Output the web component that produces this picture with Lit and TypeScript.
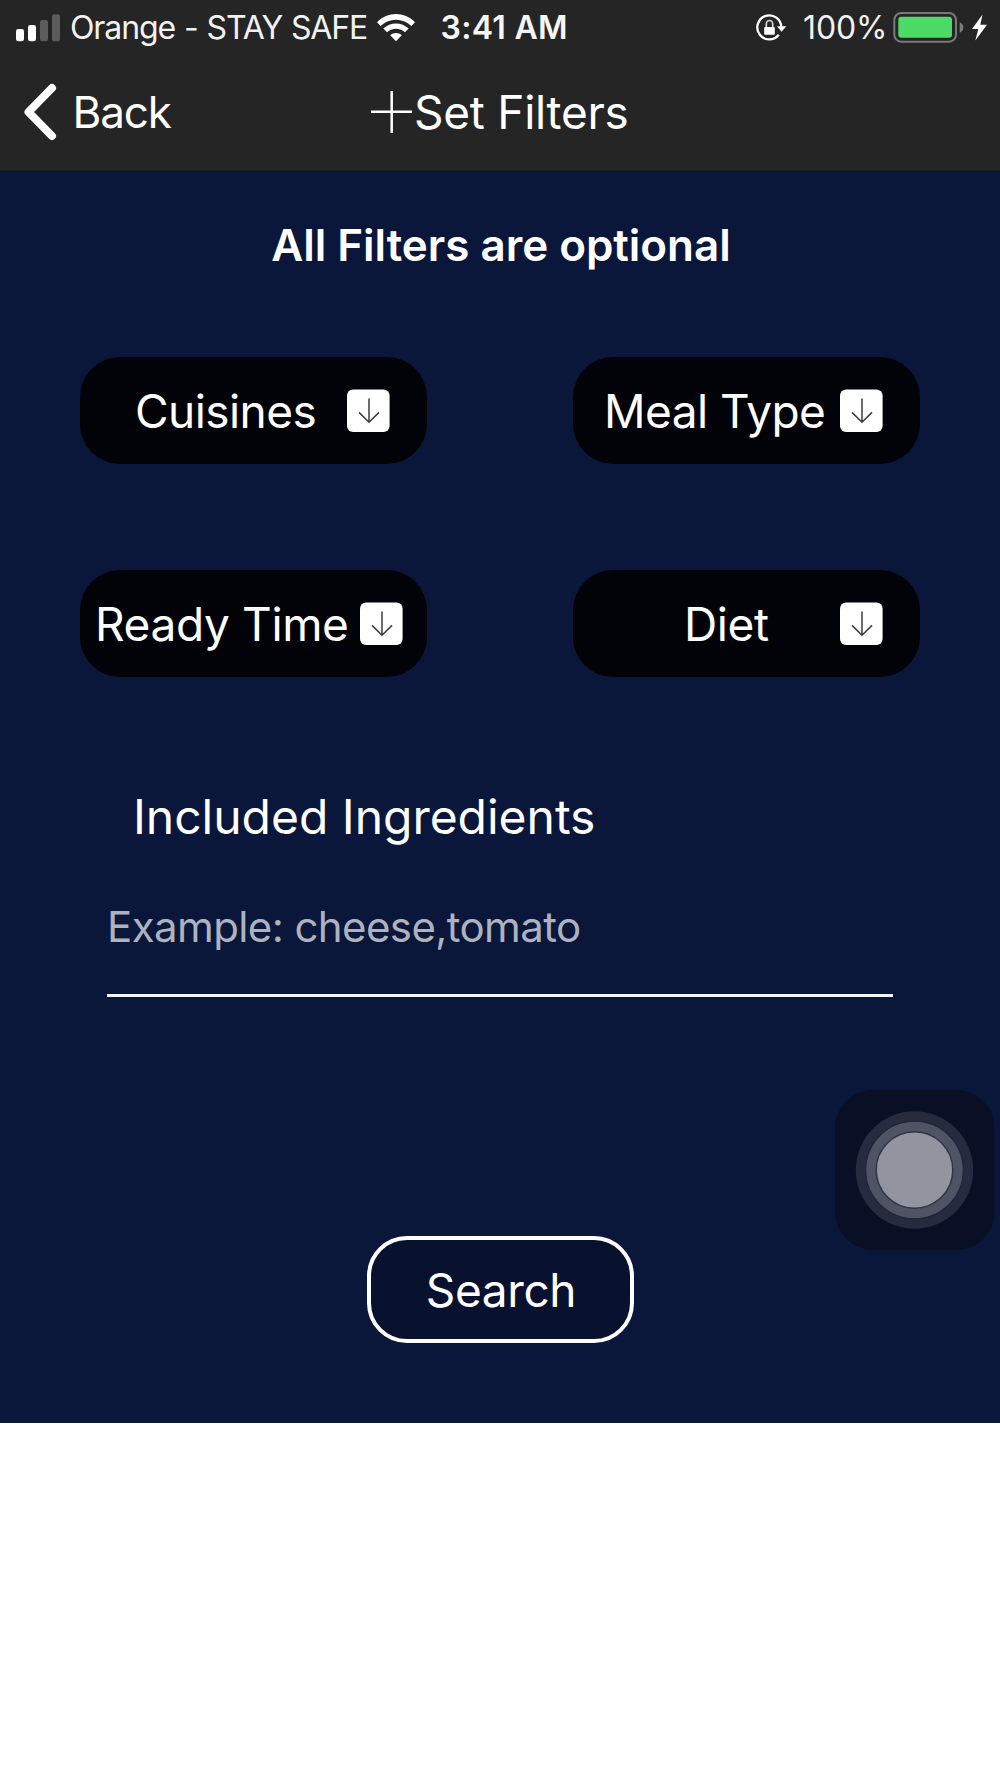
import { LitElement, html, css, svg } from 'lit';
import { customElement, property } from 'lit/decorators.js';

@customElement('filter-button')
class FilterButton extends LitElement {
  @property() label = '';

  static styles = css`
    :host { display: block; }
    .button {
      display: flex; align-items: center; justify-content: space-between;
      width: 100%; height: 107px; box-sizing: border-box;
      padding: 0 var(--pad-right, 38px) 0 var(--pad-left, 38px);
      border: 0; border-radius: 40px; background: #020308; color: #fff;
      font: 400 46px/56px Inter, sans-serif; letter-spacing: var(--spacing, -0.4px);
      white-space: nowrap; text-align: left;
    }
    .label { padding-top: 1px; }
    .icon { display: block; flex: none; width: 43px; height: 43px; }
  `;

  render() {
    return html`
      <button class="button">
        <span class="label">${this.label}</span>
        <svg class="icon" viewBox="0 0 43 43" fill="none">
          <rect x="0" y="0.4" width="42.6" height="42.6" rx="6" fill="#fff" />
          <path d="M22 9.400v23.600M12 23.400l10 9.800 10-9.800" stroke="#3c3c40" stroke-width="1.5" />
        </svg>
      </button>
    `;
  }
}

const signalIcon = svg`
  <rect x="0" y="15" width="8" height="12.3" rx="2.4" fill="#fff" />
  <rect x="12" y="11" width="8" height="16.3" rx="2.4" fill="#fff" />
  <rect x="24" y="6" width="8" height="21.3" rx="2.4" fill="#5c5c5c" />
  <rect x="36" y="0.3" width="8" height="27" rx="2.4" fill="#5c5c5c" />
`;

const wifiIcon = svg`
  <path d="M0 8.3C10.6-2.6 27.4-2.6 38 8.3L34.3 12C25.700 3.600 12.300 3.600 3.700 12Z" fill="#fff" />
  <path d="M6.300 14.600C13.500 7.700 24.500 7.700 31.700 14.600L28 18.200C22.800 13.500 15.200 13.500 10 18.200Z" fill="#fff" />
  <path d="M13.200 21.300C16.500 18.300 21.500 18.300 24.800 21.300L19 27.300Z" fill="#fff" />
`;

const rotationLockIcon = svg`
  <path d="M25.300 13.300A12 12 0 1 0 22.800 20.700" fill="none" stroke="#fff" stroke-width="2.300" />
  <path d="M21 12.300h9.300l-4.700 5.500z" fill="#fff" />
  <rect x="8.200" y="13" width="10.600" height="7.700" rx="1" fill="#fff" />
  <path d="M10.300 13.500V10.200a3.200 3.700 0 0 1 6.400 0V13.500" fill="none" stroke="#d8d8d8" stroke-width="1.700" />
`;

const batteryIcon = svg`
  <rect x="1.300" y="1" width="61.700" height="28.700" rx="7" fill="none" stroke="#7a7a7a" stroke-width="2" />
  <rect x="5.300" y="4.800" width="53.700" height="21" rx="3" fill="#4cdb64" />
  <path d="M66.700 10.200c5 1.800 5 8.600 0 10.500z" fill="#7a7a7a" />
`;

@customElement('app-root')
class AppRoot extends LitElement {
  static styles = css`
    :host { display: block; width: 1000px; height: 1778px; background: #fff; color: #fff; font-family: Inter, sans-serif; }
    svg { display: block; flex: none; overflow: visible; }
    .header { height: 171px; box-sizing: border-box; background: #252525; border-bottom: 1px solid #191b22; }
    .status { display: flex; align-items: center; height: 55px; padding: 0 13px 0 16px; box-sizing: border-box; font-size: 32px; line-height: 40px; white-space: nowrap; }
    .carrier { margin-left: 10px; width: 307px; letter-spacing: -1.1px; word-spacing: 1px; color: #f2f2f2; }
    .time { margin-left: 25.500px; font-weight: 600; letter-spacing: 0.29px; color: #f6f6f6; }
    .status-right { display: flex; align-items: center; margin-left: auto; }
    .percent { width: 90px; margin-left: 17px; letter-spacing: -0.13px; color: #f2f2f2; }
    .bolt { margin-left: 8px; }
    .nav { display: grid; grid-template-columns: 371px auto 1fr; align-items: center; height: 115px; white-space: nowrap; }
    .back { display: flex; align-items: center; padding: 0 0 1px 24px; border: 0; background: none; color: #fff; font: 400 44px/54px Inter, sans-serif; letter-spacing: -1.1px; }
    .back-label { margin-left: 16.500px; padding-bottom: 1px; }
    .title { display: flex; align-items: center; margin: 0; font-weight: 400; font-size: 46px; line-height: 56px; letter-spacing: -0.26px; }
    .title-label { margin-left: 2px; padding-bottom: 2px; }
    .content { display: flex; flex-direction: column; height: 1252px; box-sizing: border-box; padding: 47px 80px 0; background: #0a163a; }
    .hint { margin: 0; padding-left: 2px; text-align: center; font-weight: 600; font-size: 44px; line-height: 54px; letter-spacing: -0.03px; }
    .filters { display: grid; grid-template-columns: 347px 347px; justify-content: space-between; row-gap: 106px; margin-top: 85px; }
    .cuisines { --pad-left: 55px; --pad-right: 37.500px; --spacing: -0.55px; }
    .meal { --pad-left: 31px; --pad-right: 37.500px; --spacing: -0.57px; }
    .ready { --pad-left: 15px; --pad-right: 24px; --spacing: -0.36px; }
    .diet { --pad-left: 111px; --pad-right: 37.500px; --spacing: -0.39px; }
    .section { margin: 110px 0 0 53px; font-weight: 400; font-size: 48px; line-height: 60px; letter-spacing: -0.02px; }
    .field { margin: 46px 27px 0; height: 104px; box-sizing: border-box; padding: 0 0 35px; border: 0; border-bottom: 3px solid #f4f5f8; border-radius: 0; outline: none; background: none; color: #fff; font: 400 42px/66px Inter, sans-serif; letter-spacing: -0.6px; }
    .field::placeholder { color: #adb2bf; opacity: 1; }
    .search { align-self: center; margin-top: 239px; width: 267px; height: 107px; box-sizing: border-box; padding: 0 0 0 2px; border: 4px solid #fff; border-radius: 40px; background: #08112e; color: #fff; font: 400 46px/56px Inter, sans-serif; letter-spacing: -0.39px; }
    .assistive { position: absolute; left: 835px; top: 1090px; width: 160px; height: 160px; }
  `;

  render() {
    return html`
      <header class="header">
        <div class="status">
          <svg width="44" height="28" viewBox="0 0 44 28">${signalIcon}</svg>
          <span class="carrier">Orange - STAY SAFE</span>
          <svg width="38" height="28" viewBox="0 0 38 28">${wifiIcon}</svg>
          <span class="time">3:41 AM</span>
          <div class="status-right">
            <svg width="30" height="27" viewBox="0 0 30 27">${rotationLockIcon}</svg>
            <span class="percent">100%</span>
            <svg width="71" height="31" viewBox="0 0 71 31">${batteryIcon}</svg>
            <svg class="bolt" width="15" height="27" viewBox="0 0 15 27">
              <path d="M10.500 0.500L0 15h6.300L3.300 26.500 15 10.700H8.300Z" fill="#fff" />
            </svg>
          </div>
        </div>
        <nav class="nav">
          <button class="back">
            <svg width="32" height="56" viewBox="0 0 32 56">
              <path d="M28 4L4.500 28 28 52" fill="none" stroke="#fff" stroke-width="8" stroke-linecap="round" stroke-linejoin="round" />
            </svg>
            <span class="back-label">Back</span>
          </button>
          <h1 class="title">
            <svg width="41" height="43" viewBox="0 0 41 43">
              <path d="M0 20.700h41M20.700 0v42" stroke="#fff" stroke-width="2.500" />
            </svg>
            <span class="title-label">Set Filters</span>
          </h1>
        </nav>
      </header>
      <main class="content">
        <h2 class="hint">All Filters are optional</h2>
        <div class="filters">
          <filter-button class="cuisines" label="Cuisines"></filter-button>
          <filter-button class="meal" label="Meal Type"></filter-button>
          <filter-button class="ready" label="Ready Time"></filter-button>
          <filter-button class="diet" label="Diet"></filter-button>
        </div>
        <h3 class="section">Included Ingredients</h3>
        <input class="field" placeholder="Example: cheese,tomato" />
        <button class="search">Search</button>
      </main>
      <svg class="assistive" viewBox="0 0 160 160">
        <rect width="159.500" height="160" rx="38" fill="#090f24" />
        <circle cx="79.500" cy="80" r="58.700" fill="#262b3f" />
        <circle cx="79.500" cy="80" r="48.800" fill="#4e5464" stroke="#20253b" stroke-width="1.200" />
        <circle cx="79.500" cy="80" r="38.300" fill="#9294a0" stroke="#303549" stroke-width="1.500" />
      </svg>
    `;
  }
}
